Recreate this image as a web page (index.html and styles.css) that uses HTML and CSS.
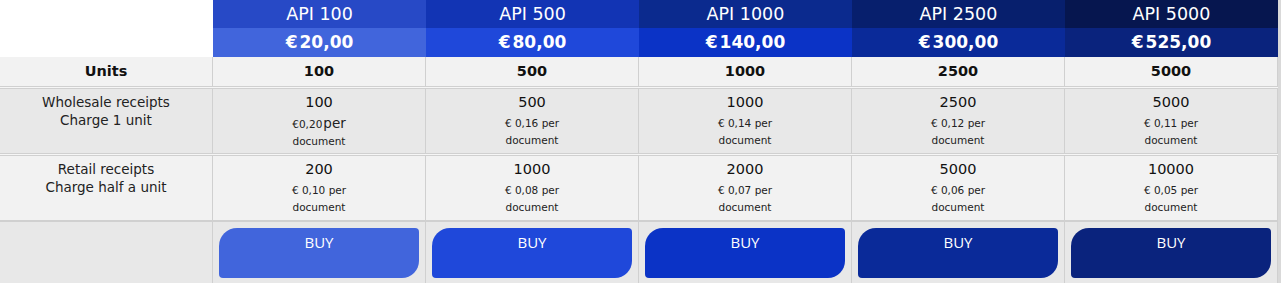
FILE: index.html
```html
<!DOCTYPE html>
<html>
<head>
<meta charset="utf-8">
<link rel="stylesheet" href="styles.css">
</head>
<body>
<div class="pricing">
  <div class="row head-names">
    <div class="blank"></div>
    <div class="name t1">API 100</div>
    <div class="name t2">API 500</div>
    <div class="name t3">API 1000</div>
    <div class="name t4">API 2500</div>
    <div class="name t5">API 5000</div>
  </div>
  <div class="row head-prices">
    <div class="blank"></div>
    <div class="price p1"><span class="eur">€</span>20,00</div>
    <div class="price p2"><span class="eur">€</span>80,00</div>
    <div class="price p3"><span class="eur">€</span>140,00</div>
    <div class="price p4"><span class="eur">€</span>300,00</div>
    <div class="price p5"><span class="eur">€</span>525,00</div>
  </div>
  <div class="row units">
    <div class="cell">Units</div>
    <div class="cell">100</div>
    <div class="cell">500</div>
    <div class="cell">1000</div>
    <div class="cell">2500</div>
    <div class="cell">5000</div>
  </div>
  <div class="row detail dark">
    <div class="cell label">Wholesale receipts<br>Charge 1 unit</div>
    <div class="cell"><div class="num">100</div><div class="sub">€0,20<span class="big">per</span><br>document</div></div>
    <div class="cell"><div class="num">500</div><div class="sub">€ 0,16 per<br>document</div></div>
    <div class="cell"><div class="num">1000</div><div class="sub">€ 0,14 per<br>document</div></div>
    <div class="cell"><div class="num">2500</div><div class="sub">€ 0,12 per<br>document</div></div>
    <div class="cell"><div class="num">5000</div><div class="sub">€ 0,11 per<br>document</div></div>
  </div>
  <div class="row detail light">
    <div class="cell label">Retail receipts<br>Charge half a unit</div>
    <div class="cell"><div class="num">200</div><div class="sub">€ 0,10 per<br>document</div></div>
    <div class="cell"><div class="num">1000</div><div class="sub">€ 0,08 per<br>document</div></div>
    <div class="cell"><div class="num">2000</div><div class="sub">€ 0,07 per<br>document</div></div>
    <div class="cell"><div class="num">5000</div><div class="sub">€ 0,06 per<br>document</div></div>
    <div class="cell"><div class="num">10000</div><div class="sub">€ 0,05 per<br>document</div></div>
  </div>
  <div class="row buy">
    <div class="cell"></div>
    <div class="cell"><button class="btn b1">BUY</button></div>
    <div class="cell"><button class="btn b2">BUY</button></div>
    <div class="cell"><button class="btn b3">BUY</button></div>
    <div class="cell"><button class="btn b4">BUY</button></div>
    <div class="cell"><button class="btn b5">BUY</button></div>
  </div>
</div>
</body>
</html>
```
FILE: styles.css
```css
* { box-sizing: border-box; }
html, body { margin: 0; padding: 0; background: #ffffff; }
body {
  font-family: "DejaVu Sans", sans-serif;
  color: #222;
  overflow: hidden;
}
.pricing {
  width: 1281px;
  background: #f6f6f6;
  border-right: 3px solid #d9d9d9;
}
.row {
  display: grid;
  grid-template-columns: repeat(6, 213px);
  text-align: center;
}
.head-names, .head-prices { background: #ffffff; }
.blank { background: #ffffff; }
.name {
  height: 28px;
  line-height: 28px;
  color: #ffffff;
  font-size: 17.5px;
}
.price {
  height: 29px;
  line-height: 29px;
  color: #ffffff;
  font-size: 17px;
  font-weight: bold;
}
.eur { margin-right: 2px; }
.t1 { background: #2749c6; }
.t2 { background: #1234b4; }
.t3 { background: #0b2a8e; }
.t4 { background: #071f6d; }
.t5 { background: #06164f; }
.p1 { background: #4165dc; }
.p2 { background: #1f48da; }
.p3 { background: #0b33c6; }
.p4 { background: #0a2a99; }
.p5 { background: #0a237d; }

.cell {
  border-right: 1px solid #d0d0d0;
}
.units {
  background: #f2f2f2;
  border-bottom: 1px solid #d0d0d0;
  height: 30px;
}
.units .cell {
  font-size: 14.5px;
  font-weight: bold;
  line-height: 29px;
  color: #111;
}
.detail {
  margin-top: 1px;
  border-top: 1px solid #d0d0d0;
  border-bottom: 1px solid #d0d0d0;
  height: 66px;
}
.detail .cell { padding-top: 3px; }
.dark { background: #e8e8e8; }
.light { background: #f2f2f2; }
.detail .label {
  padding-top: 4px;
  font-size: 13.5px;
  line-height: 18px;
  color: #222;
}
.num {
  font-size: 14.5px;
  line-height: 20px;
  color: #111;
}
.sub {
  margin-top: 3px;
  font-size: 10.5px;
  line-height: 17px;
  color: #222;
}
.sub .big { font-size: 13.5px; margin-left: 1px; }
.buy {
  background: #e8e8e8;
  border-top: 1px solid #d0d0d0;
  height: 70px;
}
.buy .cell { padding: 6px 6px 0 6px; }
.btn {
  display: block;
  width: 200px;
  height: 50px;
  border: none;
  margin: 0;
  padding: 4px 0 26px 0;
  font-family: "Open Sans", sans-serif;
  font-size: 15px;
  line-height: 20px;
  color: #ffffff;
  text-align: center;
  border-radius: 18px 4px 17px 4px;
  cursor: pointer;
}
.b1 { background: #4165dc; }
.b2 { background: #1f48da; }
.b3 { background: #0b33c6; }
.b4 { background: #0a2a99; }
.b5 { background: #0a237d; }
```
